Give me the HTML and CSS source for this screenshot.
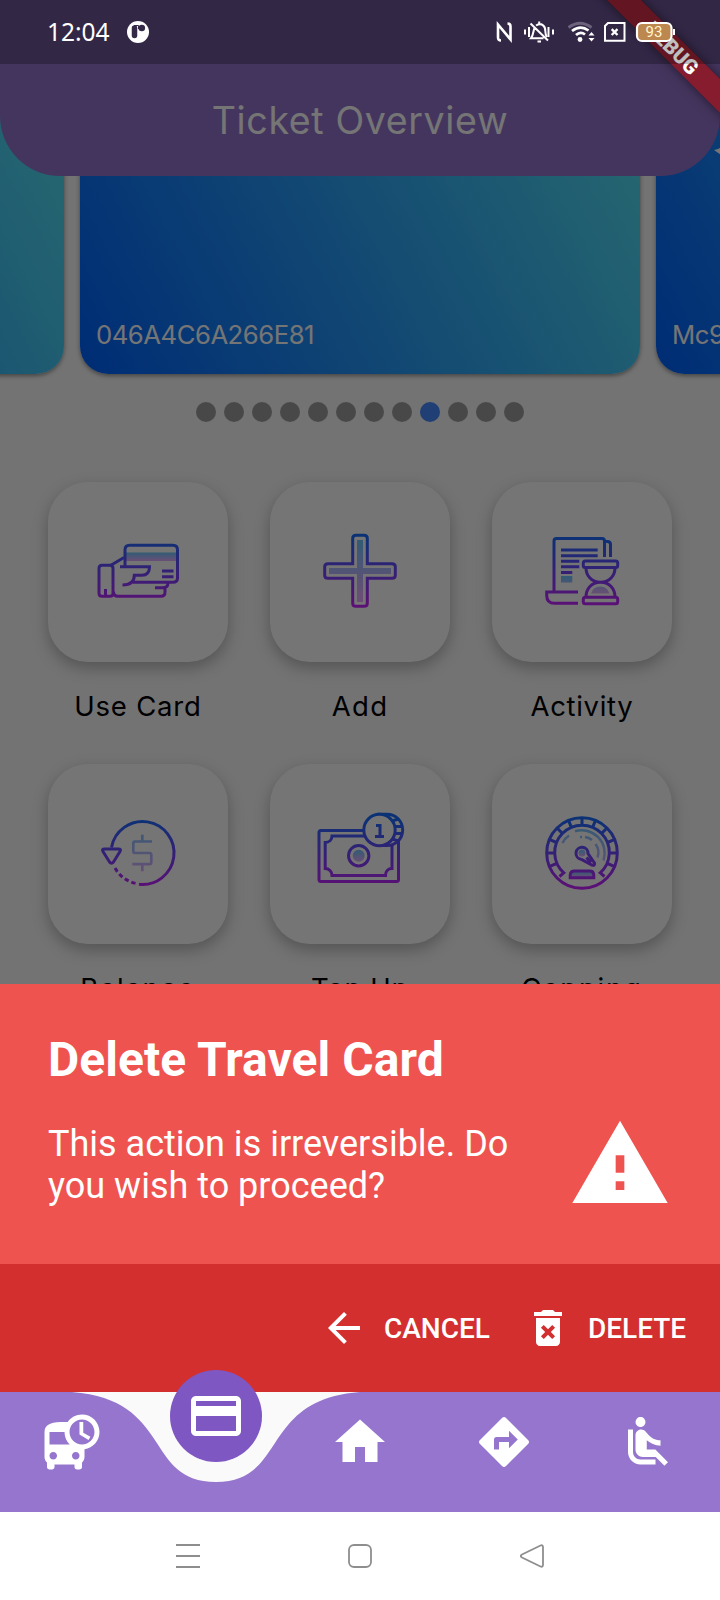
FILE: index.html
```html
<!DOCTYPE html>
<html lang="en">
<head>
<meta charset="utf-8">
<title>Ticket Overview</title>
<link rel="stylesheet" href="styles.css">
</head>
<body>
<svg class="defs" aria-hidden="true">
  <defs>
    <linearGradient id="line" gradientUnits="userSpaceOnUse" x1="0" y1="54" x2="0" y2="124">
      <stop offset="0" stop-color="#1a6dff"/><stop offset="1" stop-color="#c822ff"/>
    </linearGradient>
    <linearGradient id="soft" x1="0" y1="0" x2="0" y2="1">
      <stop offset="0" stop-color="#6dc7ff"/><stop offset="1" stop-color="#e6abff"/>
    </linearGradient>
    <linearGradient id="softArea" gradientUnits="userSpaceOnUse" x1="0" y1="58" x2="0" y2="114">
      <stop offset="0" stop-color="#6dc7ff"/><stop offset="1" stop-color="#e6abff"/>
    </linearGradient>
  </defs>
</svg>

<main class="screen">
  <header class="app-bar"><h1 class="app-title">Ticket Overview</h1></header>

  <section class="carousel">
    <article class="card"></article>
    <article class="card"><span class="card-id">046A4C6A266E81</span></article>
    <article class="card">
      <svg class="card-mark" viewBox="0 0 24 24"><path d="M13 6H22C20 12 15 17 9 19L2 14C7 13 11 11 13 6z" fill="#fff"/></svg>
      <span class="card-id card-id-mc">Mc9</span>
    </article>
  </section>

  <div class="dots">
    <i class="dot"></i><i class="dot"></i><i class="dot"></i><i class="dot"></i><i class="dot"></i><i class="dot"></i><i class="dot"></i><i class="dot"></i><i class="dot active"></i><i class="dot"></i><i class="dot"></i><i class="dot"></i>
  </div>

  <section class="actions">
    <div class="action">
      <svg class="tile" viewBox="0 0 180 180">
        <path d="M77 70.5H129.5V79H77z" fill="url(#soft)"/>
        <g class="stroke">
          <path d="M77 85V68Q77 63.3 81.5 63.3H125Q129.5 63.3 129.5 68V96Q129.5 100.3 125 100.3H85"/>
          <path d="M54 83.3H62Q65 83.3 65 86.3V111.3Q65 114.3 62 114.3H54Q51 114.3 51 111.3V86.3Q51 83.3 54 83.3zM57.5 107V114M62.5 83.5L76 75.5"/>
          <path d="M72 84.7H101.5C101.5 90 99 93.2 94 93.2H86.3C86.3 99.5 82 103 74.5 103"/>
          <path d="M107 105.7H114.5C118 105.7 120 104 120 101M117 106V110Q117 114.3 113 114.3H70Q65.5 114.3 65.5 109.5M114 89H125.5M114 94.7H125.5"/>
        </g>
      </svg>
      <span class="label use-card">Use Card</span>
    </div>
    <div class="action">
      <svg class="tile" viewBox="0 0 180 180">
        <path d="M87 58H93V86H121V92H93V120H87V92H59V86H87z" fill="url(#softArea)"/>
        <path class="stroke" d="M86 53.3H94Q97.3 53.3 97.3 56.3V81.7H122Q125.3 81.7 125.3 84.7V93.3Q125.3 96.3 122 96.3H97.3V121.3Q97.3 124.3 94 124.3H86Q82.7 124.3 82.7 121.3V96.3H58Q54.7 96.3 54.7 93.3V84.7Q54.7 81.7 58 81.7H82.7V56.3Q82.7 53.3 86 53.3z"/>
      </svg>
      <span class="label add">Add</span>
    </div>
    <div class="action">
      <svg class="tile" viewBox="0 0 180 180">
        <path d="M69 94H80.3V100.5H69zM99 111.500Q101 104.500 108.300 104.500Q115 104.500 117.500 111.500z" fill="url(#soft)"/>
        <g class="stroke">
          <path d="M62 110V59Q62 56.5 64.500 56.5H110Q112.500 56.5 112.500 59V75M113 59.500H115.500Q118.500 59.500 118.500 62.500V75"/>
          <path d="M69 68H105.7M69 73.7H105.700M69 79.300H87.300M69 84.800H87.300M69 90.400H80.300"/>
          <path d="M86 110H54.700V113.500Q54.700 121.300 62.500 121.300H86"/>
          <rect x="91.300" y="79" width="34.400" height="6.400" rx="2"/>
          <rect x="91.300" y="115.300" width="34.400" height="6.400" rx="2"/>
          <path d="M94 86C94 93 99 100.300 108.500 100.300C118 100.300 123 93 123 86M94 115C94 107 99 100.300 108.500 100.300C118 100.300 123 107 123 115"/>
        </g>
      </svg>
      <span class="label activity">Activity</span>
    </div>
    <div class="action">
      <svg class="tile" viewBox="0 0 180 180">
        <g class="stroke">
          <path d="M63.500 83.500A31.500 31.500 0 1 1 91 120.300"/>
          <path d="M88.500 119.600A31.500 31.500 0 0 1 67 104" stroke-dasharray="4.400 2.900" stroke-dashoffset="-1"/>
          <path d="M56.500 85H70.500Q73.500 85 72 87.500L65.500 98Q63.500 100.500 61.500 98L55 87.500Q53.500 85 56.500 85z"/>
        </g>
        <path d="M94.300 70.700V77.500M104 77.500H87Q85.300 77.500 85.300 79.500V87Q85.300 89 87 89H101.500Q103.300 89 103.300 91V98Q103.300 100.200 101.500 100.200H84.300M94.300 100.200V107.300" fill="none" stroke="url(#softArea)" stroke-width="2.700"/>
      </svg>
      <span class="label balance">Balance</span>
    </div>
    <div class="action">
      <svg class="tile" viewBox="0 0 180 180">
        <circle cx="88.700" cy="91.700" r="6" fill="url(#soft)"/>
        <g class="stroke">
          <rect x="49" y="66.500" width="79.500" height="51" rx="2"/>
          <path d="M62 72H115.500C115.500 76 118 78.500 122 78.500V104.500C118 104.500 115.500 107.500 115.500 111.500H62C62 107.500 59 104.500 55.200 104.500V78.500C59 78.500 62 76 62 72z"/>
          <circle cx="88.700" cy="91.700" r="10.200"/>
          <path class="tile-fill" d="M109 50.200H117A15.700 15.700 0 0 1 117 81.600H109z"/>
          <path d="M116 52.500C121 55 124.500 60 124.500 66S121 77 116 80M122 57L128.500 55M124 62.500H132M124 69.500H132M122 75L128.500 77"/>
          <circle class="tile-fill" cx="109.500" cy="66" r="15.700"/>
          <path d="M106 61.500H110V72.500M105 72.500H114" stroke-width="3"/>
        </g>
      </svg>
      <span class="label top-up">Top Up</span>
    </div>
    <div class="action">
      <svg class="tile" viewBox="0 0 180 180">
        <path d="M79.500 113V111.500Q79.500 107.500 83 107.500H97.500Q101 107.500 101 111.500V113z" fill="url(#soft)"/>
        <circle cx="90" cy="89" r="3.500" fill="url(#soft)"/>
        <g fill="none" stroke="url(#softArea)" stroke-width="2.500">
          <path d="M83 67.200A23 23 0 0 1 111.500 96.500M103.500 80Q108 86 105.500 93.500M70.500 79Q72.500 74.500 77 71.500M93 73Q97 73.500 100 76M88 73H90"/>
        </g>
        <g class="stroke">
          <circle cx="90" cy="89" r="35.300"/>
          <path d="M67.500 112.500L71.800 108.800A27.300 27.300 0 1 1 108.200 108.800L112.500 112.500"/>
          <path d="M90 54V61.500M76.600 56.700L79.500 63.600M65.300 64.300L70.600 69.600M57.700 75.600L64.600 78.500M55 89H62.500M57.700 102.400L64.600 99.500M103.400 56.700L100.500 63.600M114.700 64.300L109.400 69.600M122.300 75.600L115.400 78.500M125 89H117.500M122.300 102.400L115.400 99.500"/>
          <path d="M89 95.200A6 6 0 1 1 96 89.500L102.500 99Q103 102 100 101L89 95.200M94.500 93.500L99 98.500"/>
          <path d="M78.200 113.700V111Q78.500 107 82.500 107H98Q101.500 107 101.800 111V113.700z"/>
        </g>
      </svg>
      <span class="label capping">Capping</span>
    </div>
  </section>

  <div class="scrim"></div>
  <div class="debug-clip"><div class="debug">DEBUG</div></div>
  <div class="status-bar">
    <span class="clock">12:04</span>
    <svg class="notice" viewBox="0 0 22 22"><circle cx="11" cy="11" r="11" fill="#fff"/><path d="M7.500 7V14.500" stroke="#342a48" stroke-width="5.500" stroke-linecap="round"/><circle cx="14.800" cy="7" r="3.300" fill="#342a48"/><path d="M7 4.500H11.500V8" stroke="#342a48" stroke-width="1" fill="none"/></svg>
    <svg class="indicators" viewBox="0 0 180 24">
      <g fill="none" stroke="#fff" stroke-width="2">
        <path d="M5 20.500Q2 20.500 2 17.500V4.500L14.500 19.500V6.500Q14.500 3.500 11.500 3.500" stroke-width="2.600"/>
        <path d="M29 9.500V14.500M33 7V17M52.500 7V17M57 9.500V14.500" stroke-width="2"/>
        <path d="M39 7C37 9.500 38 14.500 35 18.200H47.500M40 5.500C45.500 2 49.500 6 49.300 11Q49.300 14.500 51 17M34.500 3.500L52 20.500M43.200 1.500V4.500M41.500 21.500H45" stroke-width="2"/>
        <path d="M72.500 7.500Q84 -1 95.500 7.500" stroke="#6d637d" stroke-width="2.800"/>
        <path d="M76 11Q84.500 4.500 92.500 10.500M80 15Q84.500 11 89 14.500" stroke-width="2.800"/>
        <path d="M112 3H128.500V20.800H109V6z"/>
        <path d="M115.700 9.200L121.500 15M121.500 9.200L115.700 15" stroke-width="2.400"/>
        <rect x="141" y="3" width="34.500" height="18" rx="5" fill="#bd8750" stroke-width="2.200"/>
      </g>
      <circle cx="84" cy="19.500" r="2.400" fill="#fff"/>
      <path d="M92.500 15.500L95.500 12L98.500 15.500zM92.500 18L95.500 21.500L98.500 18zM177 9H179V15H177z" fill="#fff"/>
      <text class="charge" x="158" y="17.300" text-anchor="middle">93</text>
    </svg>
  </div>
</main>

<section class="sheet">
  <h2 class="sheet-title">Delete Travel Card</h2>
  <div class="sheet-row">
    <p class="sheet-text">This action is irreversible. Do<br>you wish to proceed?</p>
    <svg class="warning" viewBox="0 0 24 24"><path d="M1 21h22L12 2 1 21zm12-3h-2v-2h2v2zm0-4h-2v-4h2v4z"/></svg>
  </div>
</section>
<section class="buttons">
  <svg class="btn-icon" viewBox="0 0 24 24"><path d="M20 11H7.830l5.590-5.590L12 4l-8 8 8 8 1.410-1.410L7.830 13H20v-2z"/></svg>
  <span class="btn cancel">CANCEL</span>
  <svg class="btn-icon" viewBox="0 0 24 24"><path d="M6 19c0 1.100.9 2 2 2h8c1.100 0 2-.9 2-2V7H6v12zm2.460-7.120l1.410-1.410L12 12.590l2.120-2.120 1.410 1.410L13.410 14l2.120 2.120-1.410 1.410L12 15.410l-2.120 2.120-1.410-1.410L10.590 14l-2.130-2.120zM15.500 4l-1-1h-5l-1 1H5v2h14V4z"/></svg>
  <span class="btn delete">DELETE</span>
</section>

<nav class="nav">
  <svg class="nav-shape" viewBox="0 0 720 120"><path d="M0 0H72C172.800 7.500 144 90 216 90C288 90 259.200 7.500 360 0H720V120H0z" fill="#9575cd"/></svg>
  <div class="nav-item"><svg viewBox="0 0 24 24"><path d="M16 1c-2.400 0-4.520 1.210-5.780 3.050.01-.01.01-.02.02-.03C9.840 4 9.420 4 9 4c-4.420 0-8 .5-8 4v10c0 .88.39 1.670 1 2.220V22c0 .55.45 1 1 1h1c.55 0 1-.45 1-1v-1h8v1c0 .55.45 1 1 1h1c.55 0 1-.45 1-1v-1.780c.61-.55 1-1.340 1-2.220v-3.080c3.390-.49 6-3.390 6-6.920 0-3.870-3.130-7-7-7zM4.500 19c-.83 0-1.500-.67-1.500-1.500S3.670 16 4.500 16s1.500.67 1.500 1.500S5.330 19 4.500 19zM3 13V8h6c0 1.960.81 3.730 2.110 5H3zm10.500 6c-.83 0-1.500-.67-1.500-1.500s.67-1.500 1.500-1.500 1.500.67 1.500 1.500-.67 1.500-1.500 1.500zm2.500-6c-2.760 0-5-2.240-5-5s2.240-5 5-5 5 2.240 5 5-2.240 5-5 5zm.5-9H15v5l3.620 2.160.75-1.230-2.870-1.680z"/></svg></div>
  <div class="nav-item"><span class="nav-active"><svg viewBox="0 0 24 24"><path d="M20 4H4c-1.110 0-1.990.89-1.990 2L2 18c0 1.110.89 2 2 2h16c1.110 0 2-.89 2-2V6c0-1.110-.89-2-2-2zm0 14H4v-6h16v6zm0-10H4V6h16v2z"/></svg></span></div>
  <div class="nav-item"><svg viewBox="0 0 24 24"><path d="M10 20v-6h4v6h5v-8h3L12 3 2 12h3v8z"/></svg></div>
  <div class="nav-item"><svg viewBox="0 0 24 24"><path d="M21.710 11.290l-9-9c-.39-.39-1.020-.39-1.410 0l-9 9c-.39.39-.39 1.020 0 1.410l9 9c.39.39 1.020.39 1.410 0l9-9c.39-.38.39-1.010 0-1.410zM14 14.500V12h-4v3H8v-4c0-.55.45-1 1-1h5V7.500l3.500 3.500-3.500 3.500z"/></svg></div>
  <div class="nav-item"><svg viewBox="0 0 24 24"><path d="M7.590 5.410c-.78-.78-.78-2.050 0-2.830.78-.78 2.050-.78 2.830 0 .78.78.78 2.050 0 2.830-.79.79-2.050.79-2.830 0zM6 16V7H4v9c0 2.760 2.240 5 5 5h6v-2H9c-1.660 0-3-1.340-3-3zm14 4.070L14.930 15H11.500v-3.680c1.400 1.150 3.600 2.160 5.500 2.160v-2.160c-1.660.02-3.610-.87-4.670-2.040l-1.400-1.550c-.19-.21-.43-.38-.69-.5-.29-.14-.62-.23-.96-.23h-.03C8.010 7 7 8.010 7 9.250V15c0 1.660 1.340 3 3 3h5.070l3.500 3.500L20 20.070z"/></svg></div>
</nav>

<footer class="system-nav">
  <svg viewBox="0 0 24 24"><path d="M0 1H24M0 12H24M0 23H24"/></svg>
  <svg viewBox="0 0 24 24"><rect x="1" y="1" width="22" height="22" rx="5"/></svg>
  <svg viewBox="0 0 24 24"><path d="M20.500 1.500Q23 0.500 23 3.500V20.500Q23 23.500 20.500 22.500L2 13.500Q-.5 12 2 10.500z"/></svg>
</footer>
</body>
</html>
```
FILE: styles.css
```css
* { box-sizing: border-box; }

body {
  margin: 0;
  width: 720px;
  height: 1600px;
  display: flex;
  flex-direction: column;
  overflow: hidden;
  background: #fafafa;
  font-family: Roboto, sans-serif;
}

svg { display: block; flex: none; }
.defs { position: absolute; width: 0; height: 0; }

.screen {
  position: relative;
  height: 984px;
  flex: none;
  overflow: hidden;
  background: #fafafa;
  font-family: Inter, sans-serif;
}

.app-bar {
  position: relative;
  z-index: 1;
  height: 176px;
  padding-top: 64px;
  display: flex;
  justify-content: center;
  background: #9575cd;
  border-radius: 0 0 60px 60px;
}
.app-title {
  margin: 0;
  font-size: 37.5px;
  font-weight: 400;
  line-height: 114px;
  letter-spacing: 0.65px;
  color: #fff;
}

.carousel {
  margin-top: -96px;
  height: 294px;
  display: flex;
  justify-content: center;
  gap: 16px;
}
.card {
  flex: none;
  width: 560px;
  padding: 0 16px 19px;
  display: flex;
  flex-direction: column;
  justify-content: space-between;
  background: linear-gradient(62deg, #0061ff, #57e6f4);
  border-radius: 28px;
  box-shadow: 0 2px 4px rgba(0, 0, 0, 0.4);
}
.card-mark { width: 24px; height: 24px; margin: 56px 0 0 40px; }
.card-id {
  margin-top: auto;
  font-size: 25.7px;
  line-height: 40px;
  letter-spacing: -0.48px;
  white-space: nowrap;
  color: #fff;
}

.dots {
  margin-top: 28px;
  display: flex;
  justify-content: center;
  gap: 8px;
}
.dot { width: 20px; height: 20px; border-radius: 50%; background: #9e9e9e; }
.dot.active { background: #448aff; }

.actions {
  margin-top: 60px;
  padding: 0 48px;
  display: grid;
  grid-template-columns: repeat(3, 180px);
  gap: 38px 42px;
}
.action { display: flex; flex-direction: column; align-items: center; gap: 24px; }
.tile {
  width: 180px;
  height: 180px;
  border-radius: 40px;
  background: #fff;
  box-shadow: 0 6px 16px rgba(0, 0, 0, 0.27);
}
.stroke { fill: none; stroke: url(#line); stroke-width: 3; }
.tile-fill { fill: #fff; }
.label { font-size: 27.5px; line-height: 40px; white-space: nowrap; color: #000; }
.use-card { letter-spacing: 0.8px; }
.add { letter-spacing: 1.3px; }
.activity { letter-spacing: 0.7px; }
.balance { letter-spacing: 1.7px; }
.top-up { letter-spacing: 0.7px; }
.capping { letter-spacing: 1.8px; }

.scrim { position: absolute; inset: 0; z-index: 2; background: rgba(0, 0, 0, 0.54); }

.debug-clip {
  position: absolute;
  z-index: 3;
  top: 0;
  right: 0;
  width: 180px;
  height: 180px;
  overflow: hidden;
}
.debug {
  position: absolute;
  left: 32px;
  top: 36px;
  width: 200px;
  height: 24px;
  transform: rotate(45deg);
  background: rgba(160, 20, 28, 0.72);
  box-shadow: 0 0 12px rgba(0, 0, 0, 0.5);
  color: #fff;
  font: 900 20.4px/24px Roboto, sans-serif;
  text-align: center;
}

.status-bar {
  position: absolute;
  z-index: 4;
  top: 0;
  left: 0;
  width: 720px;
  height: 64px;
  padding: 0 44px 0 47px;
  display: flex;
  align-items: center;
  background: rgba(0, 0, 0, 0.25);
}
.clock { font: 400 24.500px/64px "Noto Sans", sans-serif; color: #fff; }
.notice { width: 22px; height: 22px; margin-left: 17px; }
.indicators { width: 180px; height: 24px; margin-left: auto; }
.charge { font: 400 15px Roboto, sans-serif; fill: #fff6cf; }

.sheet { height: 280px; flex: none; padding: 48px; background: #ef5350; color: #fff; }
.sheet-title { margin: 0; font-size: 48px; font-weight: 700; line-height: 56px; letter-spacing: 0.06px; }
.sheet-row { display: flex; justify-content: space-between; align-items: flex-start; }
.sheet-text { margin: 35px 0 0; font-size: 36px; line-height: 42px; white-space: nowrap; }
.warning { width: 104px; height: 104px; margin: 24px 0 0; fill: #fff; }

.buttons {
  height: 128px;
  flex: none;
  padding-left: 320px;
  display: flex;
  align-items: center;
  background: #d32f2f;
}
.btn-icon { width: 48px; height: 48px; fill: #fff; }
.btn { padding-top: 2px; font-size: 28px; font-weight: 500; line-height: 40px; color: #fff; }
.cancel { width: 140px; margin-left: 16px; }
.delete { margin-left: 16px; }

.nav {
  position: relative;
  height: 120px;
  flex: none;
  display: grid;
  grid-template-columns: repeat(5, 144px);
  background: #fafafa;
}
.nav-shape { position: absolute; left: 0; top: 0; width: 720px; height: 120px; }
.nav-item { position: relative; display: flex; justify-content: center; padding-top: 20px; }
.nav-item svg { width: 60px; height: 60px; fill: #fff; }
.nav-active {
  position: absolute;
  top: -22px;
  width: 92px;
  height: 92px;
  display: flex;
  align-items: center;
  justify-content: center;
  border-radius: 50%;
  background: #7e57c2;
}

.system-nav {
  height: 88px;
  flex: none;
  padding: 0 176px;
  display: flex;
  align-items: center;
  justify-content: space-between;
  background: #fff;
}
.system-nav svg { width: 24px; height: 24px; fill: none; stroke: #8e8e8e; stroke-width: 1.800; }
```
